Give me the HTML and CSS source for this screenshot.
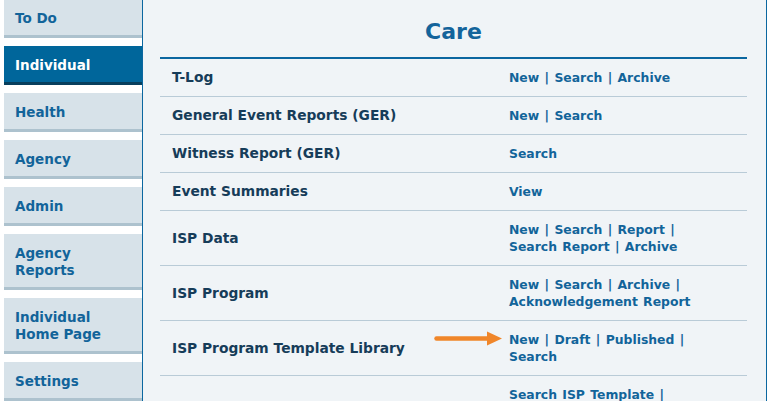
FILE: index.html
```html
<!DOCTYPE html>
<html>
<head>
<meta charset="utf-8">
<link rel="stylesheet" href="styles.css">
</head>
<body>
<div class="layout">
  <nav class="sidebar">
    <a class="tab">To Do</a>
    <a class="tab active">Individual</a>
    <a class="tab">Health</a>
    <a class="tab">Agency</a>
    <a class="tab">Admin</a>
    <a class="tab">Agency<br>Reports</a>
    <a class="tab">Individual<br>Home Page</a>
    <a class="tab">Settings</a>
  </nav>
  <main class="panel">
    <div class="content">
      <h1 class="title">Care</h1>
      <table class="menu">
        <tr><td class="label">T-Log</td><td class="links"><a>New</a> | <a>Search</a> | <a>Archive</a></td></tr>
        <tr><td class="label">General Event Reports (GER)</td><td class="links"><a>New</a> | <a>Search</a></td></tr>
        <tr><td class="label">Witness Report (GER)</td><td class="links"><a>Search</a></td></tr>
        <tr><td class="label">Event Summaries</td><td class="links"><a>View</a></td></tr>
        <tr><td class="label">ISP Data</td><td class="links"><a>New</a> | <a>Search</a> | <a>Report</a> |<br><a>Search Report</a> | <a>Archive</a></td></tr>
        <tr><td class="label">ISP Program</td><td class="links"><a>New</a> | <a>Search</a> | <a>Archive</a> |<br><a>Acknowledgement Report</a></td></tr>
        <tr><td class="label">ISP Program Template Library</td><td class="links"><span class="arrow"><svg width="68" height="15" viewBox="0 0 68 15"><line x1="2.5" y1="7.5" x2="55" y2="7.5" stroke="#f0862a" stroke-width="4.5" stroke-linecap="round"/><polygon points="53,0.5 68,7.5 53,14.5" fill="#f0862a"/></svg></span><a>New</a> | <a>Draft</a> | <a>Published</a> |<br><a>Search</a></td></tr>
        <tr><td class="label"></td><td class="links"><a>Search ISP Template</a> |<br>&nbsp;</td></tr>
      </table>
    </div>
  </main>
</div>
</body>
</html>
```

FILE: styles.css
```css
html, body {
  margin: 0;
  padding: 0;
  background: #ffffff;
  height: 100%;
  overflow: hidden;
}
body {
  font-family: "DejaVu Sans", Verdana, sans-serif;
  font-weight: bold;
  font-size: 13.5px;
  line-height: 17px;
}
.layout {
  display: flex;
  height: 401px;
  padding-left: 4px;
}
.sidebar {
  width: 138px;
  flex: none;
  display: flex;
  flex-direction: column;
  gap: 8px;
  margin-top: -1px;
}
.tab {
  display: block;
  background: #d7e2e9;
  border-bottom: 3px solid #adc2ce;
  color: #12649a;
  padding: 11px 8px 8px 11px;
  text-decoration: none;
}
.tab.active {
  background: #00669b;
  border-bottom-color: #083f5d;
  color: #ffffff;
}
.panel {
  flex: 1;
  background: #f0f4f7;
  border-left: 1px solid #0b67a0;
  border-right: 1px solid #0b67a0;
}
.content {
  padding: 0 19px 0 17px;
}
.title {
  margin: 0;
  padding: 19px 0 12px;
  font-size: 22px;
  line-height: 26px;
  text-align: center;
  color: #14649b;
}
.menu {
  width: 100%;
  border-collapse: collapse;
  border-top: 2px solid #0b67a0;
}
.menu td {
  border-bottom: 1px solid #b9cbd7;
  padding: 10px 12px;
  vertical-align: middle;
}
.menu .label {
  width: 325px;
  color: #163c59;
  font-size: 13.8px;
}
.menu .links {
  padding-left: 0;
  color: #12649a;
  font-size: 12.4px;
  word-spacing: 1px;
  position: relative;
}
.links a {
  color: #12649a;
}
.arrow {
  position: absolute;
  right: calc(100% + 7px);
  top: 10px;
  line-height: 0;
}
```
